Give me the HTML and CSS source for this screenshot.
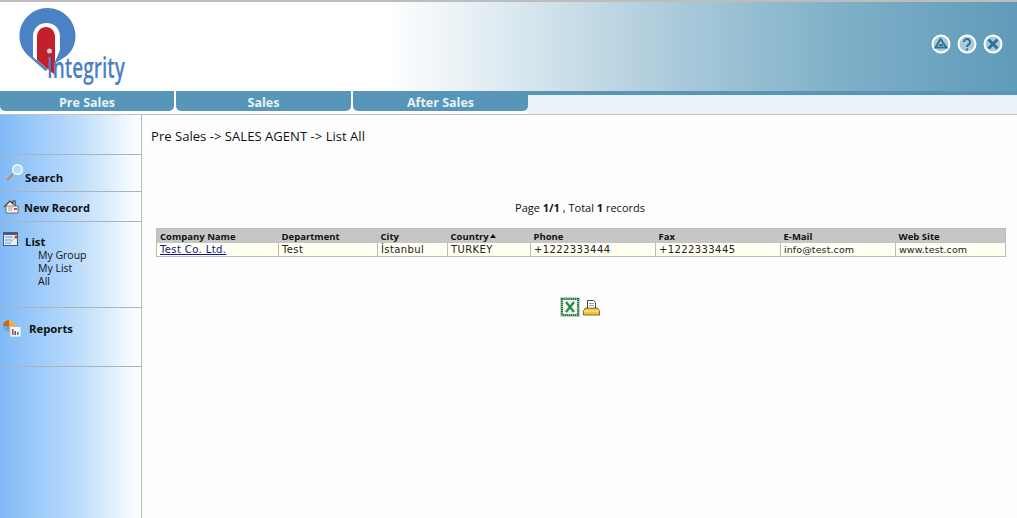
FILE: index.html
```html
<!DOCTYPE html>
<html lang="en">
<head>
<meta charset="utf-8">
<title>Integrity</title>
<link rel="stylesheet" href="styles.css">
</head>
<body>
<header class="banner">
  <svg class="logo" width="175" height="89" viewBox="0 2 175 89" aria-label="Integrity logo">
    <path d="M47.500 8C63 8 75.500 20.500 75.500 36c0 9-4 17-12 22l-8 5-10 8-18-16C22.500 50 19.500 44 19.500 36 19.500 20.500 32 8 47.500 8z" fill="#4a82c3"/>
    <path d="M33 57V37c0-9 6-14 13.500-14S60 28 60 37v13l-5 12v13z" fill="#fff"/>
    <path d="M37 60V37c0-6 4-10 9-10s9 4 9 10v38z" fill="#c4202c"/>
    <circle cx="49.500" cy="51" r="2.500" fill="#d5d0d8"/>
    <text x="47" y="78" class="logo-text" textLength="78" lengthAdjust="spacingAndGlyphs">Integrity</text>
  </svg>
  <div class="tools">
    <svg class="tool" viewBox="0 0 20 20"><circle cx="10" cy="10" r="8.500"/><path d="M4.500 13.500 9.500 5l6 8.500zM8 11h4" class="glyph"/></svg>
    <svg class="tool" viewBox="0 0 20 20"><circle cx="10" cy="10" r="8.500"/><path d="M7 8a3 3 0 1 1 4.500 2.600c-1 .7-1.500 1.200-1.500 2.400M10 14.500v2" class="glyph"/></svg>
    <svg class="tool" viewBox="0 0 20 20"><circle cx="10" cy="10" r="8.500"/><path d="m5.500 5.500 9 9m0-9-9 9" class="glyph thick"/></svg>
  </div>
</header>
<nav class="tabs">
  <a class="tab tab-a">Pre Sales</a>
  <a class="tab tab-b">Sales</a>
  <a class="tab tab-c">After Sales</a>
  <div class="tab-fill"></div>
</nav>
<div class="page">
  <aside class="side">
    <div class="sec sec-top"></div>
    <div class="sec sec-search">
      <svg class="ic" width="20" height="20" viewBox="0 0 20 20"><path d="m2 17 6-6" stroke="#c98a5a" stroke-width="2.200"/><circle cx="12.500" cy="6.500" r="4.800" fill="#b7dcf8" stroke="#f6f9fc" stroke-width="1.500"/></svg>
      <b>Search</b>
    </div>
    <div class="sec sec-new">
      <svg class="ic" width="16" height="15" viewBox="0 0 16 15"><path d="M1 8 7 2l3 3V2h2v5l3 2" fill="#fff" stroke="#4a3c2c" stroke-width="1.200"/><path d="M3 7h12v7H3z" fill="#f6f6f6" stroke="#555" stroke-width=".8"/><path d="M5 9h5M5 11h4" stroke="#8aa"/><path d="M11 9h3v2h-3z" fill="#d44"/></svg>
      <b>New Record</b>
    </div>
    <div class="sec sec-list">
      <div class="list-head">
        <svg class="ic" width="15" height="14" viewBox="0 0 15 14"><path d="M0 0h15v14H0z" fill="#4d5a70"/><path d="M1 3h13v10H1z" fill="#e6effa"/><path d="M2 5h8M2 8h7M2 11h6" stroke="#5a90d8"/><path d="m8 10 5-5" stroke="#e8b070"/><circle cx="13" cy="5" r="1.500" fill="#d33"/></svg>
        <b>List</b>
      </div>
      <ul class="sub">
        <li>My Group</li>
        <li>My List</li>
        <li>All</li>
      </ul>
    </div>
    <div class="sec sec-rep">
      <svg class="ic" width="19" height="19" viewBox="0 0 19 19"><circle cx="7" cy="7" r="6" fill="#e8b23a"/><path d="M7 7V1a6 6 0 0 0-6 6z" fill="#c8603a"/><path d="M1 7a6 6 0 0 0 6 6V7z" fill="#6aa8e0"/><path d="M8 7.500h11V18H8z" fill="#f4f8fc" stroke="#9ab" stroke-width=".6"/><path d="M10 16v-6h1.500v6z" fill="#d33"/><path d="M12.500 16v-4H14v4z" fill="#2a5ab0"/><path d="M15 16v-3h1.500v3z" fill="#2a8a4a"/></svg>
      <b>Reports</b>
    </div>
    <div class="sec sec-end"></div>
  </aside>
  <main class="main">
    <p class="crumb">Pre Sales -&gt; SALES AGENT -&gt; List All</p>
    <p class="pager">Page <b>1/1</b> , Total <b>1</b> records</p>
    <table class="grid">
      <colgroup>
        <col class="c1"><col class="c2"><col class="c3"><col class="c4"><col class="c5"><col class="c6"><col class="c7"><col class="c8">
      </colgroup>
      <thead>
        <tr><th>Company Name</th><th>Department</th><th>City</th><th>Country <span class="sort"></span></th><th>Phone</th><th>Fax</th><th>E-Mail</th><th>Web Site</th></tr>
      </thead>
      <tbody>
        <tr><td><a href="#">Test Co. Ltd.</a></td><td>Test</td><td>İstanbul</td><td>TURKEY</td><td>+1222333444</td><td>+1222333445</td><td class="tight">info@test.com</td><td class="tight">www.test.com</td></tr>
      </tbody>
    </table>
    <div class="export">
      <svg width="20" height="20" viewBox="0 0 20 20"><path d="M0 0h20v20H0z" fill="#c8d0cc"/><path d="M2 2h16v16H2z" fill="#eef5ec" stroke="#1c7a3c" stroke-width="2" stroke-dasharray="1.500 .6"/><path d="m6 5 8 10m0-10-8 10" stroke="#2a8a4c" stroke-width="2.200"/></svg>
      <svg width="17" height="17" viewBox="0 0 17 17"><path d="M4.500 1.500h6l2 2v6h-8z" fill="#fff" stroke="#333" stroke-width=".9"/><path d="M6 4.500h5M6 6.500h5" stroke="#6a8a9a" stroke-width=".8"/><path d="M2.500 9h12l2 3v4H.5v-4z" fill="#f2c23c" stroke="#5a4a20" stroke-width=".8"/><path d="M1 12h15" stroke="#fff3b0"/></svg>
    </div>
  </main>
</div>
</body>
</html>
```

FILE: styles.css
```css
* { box-sizing: border-box; }
html, body { margin: 0; height: 100%; }
body { background: #fff; font-family: "DejaVu Sans", sans-serif; color: #111; overflow: hidden; }

.banner {
  height: 91px;
  border-top: 2px solid #bdbdbd;
  display: flex;
  justify-content: space-between;
  align-items: flex-start;
  padding-right: 14px;
  background: linear-gradient(90deg, #fff 0, #fff 385px, #dce9f0 510px, #a9c9da 680px, #7fb0c8 840px, #5f9bb9 1017px);
}
.logo { flex: none; }
.logo-text { font-family: "Open Sans", sans-serif; font-size: 28px; font-weight: 600; fill: #4a7fc0; }
.tools { display: flex; gap: 6px; margin-top: 32px; }
.tool { width: 20px; height: 20px; }
.tool circle { fill: #a8cbdc; stroke: #fff; stroke-width: 2; }
.glyph { fill: none; stroke: #2f7294; stroke-width: 2; }
.glyph.thick { stroke-width: 3; }

.tabs {
  height: 23px;
  display: flex;
  align-items: flex-start;
  background: #fff;
}
.tab {
  height: 20px;
  padding-top: 2px;
  display: flex;
  align-items: center;
  justify-content: center;
  background: #5796b8;
  color: #e8f2f7;
  font-family: "Open Sans", sans-serif;
  font-size: 12.500px;
  font-weight: 700;
  border-radius: 0 0 5px 5px;
}
.tab-a { width: 174px; }
.tab-b { width: 175px; margin-left: 2px; }
.tab-c { width: 175px; margin-left: 2px; }
.tab-fill { flex: 1; height: 23px; border-top: 4px solid #5796b8; background: #e9f2f6; }

.page {
  height: 404px;
  display: grid;
  grid-template-columns: 142px 1fr;
  border-top: 1px solid #c0c0c0;
}
.side {
  border-right: 1px solid #bbb;
  background: linear-gradient(90deg, #80baf7 0, #bcdcfb 55%, #fff 100%);
  display: flex;
  flex-direction: column;
  font-family: "Open Sans", sans-serif;
  font-size: 11px;
  color: #111;
}
.sec { border-bottom: 1px solid #aab3bb; }
.sec-top { height: 40px; }
.sec-search { height: 37px; padding: 8px 0 0 5px; display: flex; align-items: flex-start; }
.sec-search b { margin-top: 7px; font-size: 11.300px; }
.sec-new { height: 30px; padding: 7px 0 0 3px; display: flex; align-items: flex-start; gap: 5px; }
.sec-new b { padding-top: 1px; }
.sec-list { height: 86px; padding: 10px 0 0 3px; }
.list-head { display: flex; gap: 7px; height: 14px; }
.list-head b { padding-top: 2px; font-size: 11.300px; }
.sub { list-style: none; margin: 3px 0 0 35px; padding: 0; line-height: 13px; font-size: 10.500px; }
.sec-rep { height: 59px; padding: 11px 0 0 2px; display: flex; gap: 8px; }
.sec-rep b { padding-top: 2px; font-size: 11.300px; }
.sec-end { flex: 1; border-bottom: 0; }

.main { background: #fdfdfd; min-width: 0; }
.crumb { margin: 12px 0 0 9px; font-family: "Open Sans", sans-serif; font-size: 13.100px; line-height: 18px; }
.pager { margin: 56px 0 0 0; text-align: center; font-family: "Open Sans", sans-serif; font-size: 11px; line-height: 14px; width: 876px; }
.grid {
  margin: 13px 0 0 14px;
  width: 849px;
  table-layout: fixed;
  border-collapse: collapse;
  border: 1px solid #bbb;
  font-size: 10px;
}
.c1 { width: 122px; } .c2 { width: 99px; } .c3 { width: 70px; } .c4 { width: 83px; }
.c5 { width: 125px; } .c6 { width: 125px; } .c7 { width: 115px; } .c8 { width: 110px; }
th, td { padding: 1px 0 0 3px; text-align: left; white-space: nowrap; overflow: hidden; }
th { height: 14px; line-height: 13px; background: #c6c6c6; font-family: "Open Sans", sans-serif; font-size: 9.500px; font-weight: 700; }
td { height: 13px; line-height: 12px; background: #fffff2; border-left: 1px solid #bbb; color: #222; letter-spacing: .4px; }
td:first-child { border-left: 0; }
td.tight { font-size: 9.500px; letter-spacing: .1px; }
td a { color: #11119a; }
.sort { display: inline-block; width: 0; height: 0; border: 3.500px solid transparent; border-top: 0; border-bottom: 4px solid #111; vertical-align: 2px; margin-left: -1px; }
.export { display: flex; justify-content: center; align-items: center; gap: 3px; margin: 40px 0 0 0; width: 876px; }
```
